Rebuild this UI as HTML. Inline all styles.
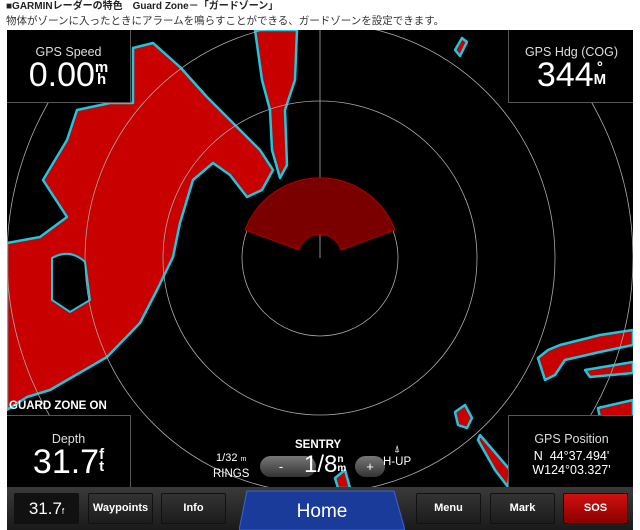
<!DOCTYPE html>
<html style="overflow:hidden"><head><meta charset="utf-8"><style>
html,body{margin:0;width:640px;height:530px;overflow:hidden}
body{background:#fff;position:relative;font-family:"Liberation Sans","Noto Sans CJK JP",sans-serif}
.t1{position:absolute;left:6px;top:1px;font-size:10px;font-weight:bold;color:#222;white-space:nowrap;line-height:12px}
.t2{position:absolute;left:6px;top:15px;font-size:10.5px;color:#333;white-space:nowrap;line-height:13px}
.scr{position:absolute;left:7px;top:30px;width:626px;height:500px;background:#000;overflow:hidden}
.box{position:absolute;background:#000;border:1px solid #555;color:#fff;text-align:center;overflow:hidden}
.lbl{font-size:12.5px;color:#ddd}
.big{font-size:34px;line-height:32px}
.sup{display:inline-block;font-size:15px;line-height:12px;font-weight:bold;vertical-align:top;margin-top:3px}
.bar{position:absolute;left:0;top:457px;width:626px;height:43px;background:linear-gradient(#3a3a3a,#1a1a1a)}
.btn{position:absolute;top:6px;height:29px;width:63px;background:linear-gradient(#333,#1c1c1c);border:1px solid #111;color:#fff;font-size:11px;font-weight:bold;text-align:center;line-height:29px;border-radius:2px}
</style></head><body>
<div class="t1">■GARMINレーダーの特色　Guard Zone－「ガードゾーン」</div>
<div class="t2">物体がゾーンに入ったときにアラームを鳴らすことができる、ガードゾーンを設定できます。</div>
<div class="scr">
<svg width="626" height="500" style="position:absolute;left:0;top:0">
<g transform="translate(-7,-30)">
<g fill="#c80000" stroke="#1ac8e0" stroke-width="2.5" stroke-linejoin="round">
<path d="M133,103 L133,48 L153,43 L180,67 L207,97 L233,123 L260,150 L273,170 L262,190 L247,197 L230,175 L213,163 L193,180 L180,223 L173,257 L157,290 L140,323 L107,357 L50,390 L27,397 L7,410 L7,243 L40,237 L67,217 L43,180 L67,140 L77,110 L110,103 Z"/>
<path d="M255,30 L297,30 L295,80 L285,110 L287,165 L280,178 L272,150 L270,110 L262,80 Z"/>
<path d="M455,50 L462,38 L467,42 L460,56 Z"/>
<path d="M538,358 L548,350 L560,345 L600,335 L633,330 L633,345 L600,352 L565,360 L555,375 L545,380 Z"/>
<path d="M585,370 L633,362 L633,373 L590,377 Z"/>
<path d="M455,412 L465,405 L472,418 L467,428 L458,425 Z"/>
<path d="M480,435 L510,470 L508,487 L495,470 L478,440 Z"/>
<path d="M598,408 L633,400 L633,420 L600,418 Z"/>
<path d="M335,478 L345,470 L350,488 L338,488 Z"/>
</g>
<path d="M52,258 Q70,248 85,262 L90,300 L70,312 L52,300 Z" fill="#000" stroke="#1ac8e0" stroke-width="2"/>
<g fill="none" stroke="#aaa" stroke-width="0.8">
<circle cx="320" cy="258" r="78"/><circle cx="320" cy="258" r="157"/><circle cx="320" cy="258" r="235"/><circle cx="320" cy="258" r="313"/>
<line x1="320" y1="30" x2="320" y2="258"/>
</g>
<path d="M245,230 A80,80 0 0 1 395,230 L341,250 A22,22 0 0 0 299,250 Z" fill="#7a0000" stroke="#a00" stroke-width="1"/>
</g>
</svg>
<div class="box" style="left:0;top:0;width:123px;height:72px;border-top:none;border-left:none"><div class="lbl" style="margin-top:15px">GPS Speed</div><div class="big">0.00<span class="sup">m<br>h</span></div></div>
<div class="box" style="left:501px;top:0;width:125px;height:72px;border-top:none;border-right:none"><div class="lbl" style="margin-top:15px">GPS Hdg (COG)</div><div class="big">344<span class="sup">°<br>M</span></div></div>
<div style="position:absolute;left:2px;top:370px;color:#fff;font-size:11.5px;font-weight:bold">GUARD ZONE ON</div>
<div class="box" style="left:0;top:385px;width:123px;height:72px;border-left:none;border-bottom:none"><div class="lbl" style="margin-top:16px">Depth</div><div class="big">31.7<span class="sup">f<br>t</span></div></div>
<div class="box" style="left:501px;top:385px;width:125px;height:72px;border-right:none;border-bottom:none"><div class="lbl" style="margin-top:16px">GPS Position</div><div style="font-size:12.5px;line-height:14px;margin-top:3px">N&nbsp;&nbsp;44°37.494'<br>W124°03.327'</div></div>
<div style="position:absolute;left:206px;top:421px;color:#fff;font-size:11px;text-align:center;line-height:15px">1/32 <span style="font-size:7px">m</span><br><span style="font-size:11.5px">RINGS</span></div>
<div style="position:absolute;left:288px;top:409px;color:#fff;font-size:11.5px;font-weight:bold">SENTRY</div>
<div style="position:absolute;left:253px;top:426px;width:56px;height:21px;border-radius:11px;background:linear-gradient(#777,#333);color:#fff;font-size:13px;text-align:center;line-height:21px;padding-right:14px;box-sizing:border-box">-</div>
<div style="position:absolute;left:348px;top:426px;width:30px;height:21px;border-radius:11px;background:linear-gradient(#777,#333);color:#fff;font-size:13px;text-align:center;line-height:21px">+</div>
<div style="position:absolute;left:297px;top:422px;color:#fff;font-size:24px;line-height:26px">1/8<span class="sup" style="font-size:10px;line-height:9px">n<br>m</span></div>
<div style="position:absolute;left:376px;top:414px;color:#fff;font-size:10px;line-height:12px">&nbsp;&nbsp;&nbsp;&nbsp;⍋<br><span style="font-size:11.5px">H-UP</span></div>
<div class="bar">
<div class="btn" style="left:7px;font-size:17px;font-weight:normal;background:#111">31.7<span style="font-size:8px">f</span></div>
<div class="btn" style="left:81px">Waypoints</div>
<div class="btn" style="left:154px">Info</div>
<svg style="position:absolute;left:232px;top:2px" width="166" height="41"><path d="M8,2 L155,2 L166,41 L0,41 Z" fill="#1a3b9a" stroke="#3d64d0"/><text x="83" y="28" fill="#fff" font-size="19" text-anchor="middle" font-family="Liberation Sans">Home</text></svg>
<div class="btn" style="left:409px">Menu</div>
<div class="btn" style="left:483px">Mark</div>
<div class="btn" style="left:556px;background:linear-gradient(#d01010,#8a0000)">SOS</div>
</div>
</div>
</body></html>
